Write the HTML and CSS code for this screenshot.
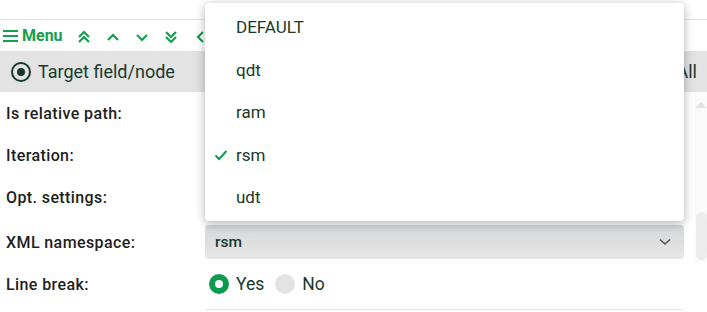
FILE: index.html
```html
<!DOCTYPE html>
<html>
<head>
<meta charset="utf-8">
<link rel="stylesheet" href="styles.css">
</head>
<body>
<div class="page">
  <div class="main">
    <div class="top-strip"></div>
    <div class="toolbar">
      <span class="menu-btn">
        <svg class="burger" width="15" height="14" viewBox="0 0 15 14"><rect x="0" y="1" width="15" height="2"/><rect x="0" y="6" width="15" height="2"/><rect x="0" y="11" width="15" height="2"/></svg>
        Menu
      </span>
      <span class="tool-icons">
        <svg width="14" height="16" viewBox="0 0 14 16"><path d="M2 8 L7 3 L12 8 M2 13 L7 8 L12 13"/></svg>
        <svg width="14" height="16" viewBox="0 0 14 16"><path d="M2 11 L7 6 L12 11"/></svg>
        <svg width="14" height="16" viewBox="0 0 14 16"><path d="M2 6 L7 11 L12 6"/></svg>
        <svg width="14" height="16" viewBox="0 0 14 16"><path d="M2 3 L7 8 L12 3 M2 8 L7 13 L12 8"/></svg>
        <svg width="14" height="16" viewBox="0 0 14 16"><path d="M10 3 L5 8 L10 13"/></svg>
      </span>
    </div>
    <div class="target-row">
      <span class="target-radio"></span>
      <span class="target-label">Target field/node</span>
      <span class="target-all">All</span>
    </div>
    <div class="body-area">
      <div class="form">
        <div class="row r42"><span class="label">Is relative path:</span><span class="field"></span></div>
        <div class="row r42"><span class="label">Iteration:</span><span class="field"></span></div>
        <div class="row r42"><span class="label">Opt. settings:</span><span class="field"></span></div>
        <div class="row r48"><span class="label">XML namespace:</span>
          <div class="select"><span>rsm</span>
            <svg width="12" height="8" viewBox="0 0 12 8"><path d="M1 1.5 L6 6 L11 1.5"/></svg>
          </div>
        </div>
        <div class="row r36"><span class="label">Line break:</span>
          <div class="radios">
            <span class="radio on"></span><span class="rtext">Yes</span>
            <span class="radio off"></span><span class="rtext">No</span>
          </div>
        </div>
        <div class="row last"><span class="label"></span><div class="stub"></div></div>
      </div>
      <div class="scroll">
        <div class="arrow"></div>
        <div class="thumb"></div>
      </div>
    </div>
  </div>
  <div class="dropdown">
    <div class="item">DEFAULT</div>
    <div class="item">qdt</div>
    <div class="item">ram</div>
    <div class="item selected"><svg class="check" width="14" height="12" viewBox="0 0 14 12"><path d="M1.5 6.5 L5 10 L12.5 2"/></svg>rsm</div>
    <div class="item">udt</div>
  </div>
</div>
</body>
</html>
```
FILE: styles.css
```css
html, body {
  margin: 0;
  padding: 0;
  background: #ffffff;
}
body {
  font-family: Roboto, "Noto Sans", sans-serif;
  width: 707px;
  height: 312px;
  overflow: hidden;
}
.page {
  position: relative;
  width: 707px;
  height: 312px;
  overflow: hidden;
}
.main {
  display: flex;
  flex-direction: column;
}
.top-strip {
  height: 19px;
  border-bottom: 1px solid #e4e4e4;
}
.toolbar {
  height: 31px;
  display: flex;
  align-items: center;
  padding-left: 3px;
  color: #14a050;
}
.menu-btn {
  display: flex;
  align-items: center;
  gap: 4px;
  font-weight: 700;
  font-size: 16px;
}
.burger rect {
  fill: #14a050;
}
.tool-icons {
  display: flex;
  align-items: center;
  gap: 15px;
  margin-left: 14px;
  padding-top: 2px;
}
.tool-icons svg path {
  fill: none;
  stroke: #14a050;
  stroke-width: 2.2;
}
.target-row {
  height: 41px;
  background: #e3e3e3;
  display: flex;
  align-items: center;
  padding-left: 11px;
  color: #17392b;
  font-size: 18px;
}
.target-radio {
  width: 16px;
  height: 16px;
  border: 2px solid #17392b;
  border-radius: 50%;
  position: relative;
  box-sizing: content-box;
}
.target-radio::after {
  content: "";
  position: absolute;
  left: 4px;
  top: 4px;
  width: 8px;
  height: 8px;
  border-radius: 50%;
  background: #17392b;
}
.target-label {
  margin-left: 7px;
}
.target-all {
  margin-left: auto;
  margin-right: 10px;
}
.body-area {
  display: flex;
}
.form {
  width: 684px;
  display: flex;
  flex-direction: column;
}
.row {
  display: flex;
  align-items: center;
}
.r42 { height: 42px; }
.r48 { height: 48px; }
.r36 { height: 36px; }
.label {
  width: 205px;
  padding-left: 6px;
  padding-top: 1px;
  box-sizing: border-box;
  font-size: 16px;
  font-weight: 500;
  letter-spacing: 0.4px;
  color: #1e1e1e;
  flex-shrink: 0;
}
.field {
  flex: 1;
}
.select {
  flex: 1;
  height: 34px;
  border-radius: 4px;
  background: linear-gradient(#d6d7d9, #e6e6e6);
  display: flex;
  align-items: center;
  justify-content: space-between;
  padding: 0 13px 0 10px;
  color: #17392b;
  font-size: 15.5px;
  font-weight: 500;
}
.select svg path {
  fill: none;
  stroke: #555;
  stroke-width: 1.6;
}
.radios {
  display: flex;
  align-items: center;
  padding-left: 4px;
  font-size: 17.5px;
  color: #17392b;
}
.radio {
  width: 20px;
  height: 20px;
  border-radius: 50%;
  box-sizing: border-box;
}
.radio.on {
  border: 6px solid #0c9a4e;
  background: #fff;
}
.radio.off {
  background: #e3e3e3;
  margin-left: 11px;
}
.rtext {
  margin-left: 7px;
}
.last {
  height: 20px;
  align-items: flex-start;
  padding-top: 7px;
}
.stub {
  flex: 1;
  height: 20px;
  border-top: 1px solid #e3e3e3;
  border-radius: 4px 4px 0 0;
}
.scroll {
  margin-left: 11px;
  width: 12px;
  display: flex;
  flex-direction: column;
  align-items: center;
  background: #fafafa;
  height: 170px;
}
.arrow {
  margin-top: 10px;
  width: 0;
  height: 0;
  border-left: 6px solid transparent;
  border-right: 6px solid transparent;
  border-bottom: 6px solid #e3e3e3;
}
.thumb {
  margin-top: 104px;
  width: 11px;
  height: 48px;
  border-radius: 6px;
  background: #ececec;
}
.dropdown {
  position: absolute;
  left: 205px;
  top: 3px;
  width: 479px;
  height: 218px;
  background: #fff;
  border-radius: 4px;
  box-shadow: 0 3px 8px rgba(0,0,0,0.22), 0 0 14px rgba(0,0,0,0.10);
  display: flex;
  flex-direction: column;
  padding-top: 3px;
  box-sizing: border-box;
}
.item {
  height: 42.5px;
  display: flex;
  align-items: center;
  padding-left: 31px;
  font-size: 17px;
  color: #17392b;
  position: relative;
}
.check {
  position: absolute;
  left: 9px;
  top: 15px;
}
.check path {
  fill: none;
  stroke: #0c9a4e;
  stroke-width: 2;
}
```
